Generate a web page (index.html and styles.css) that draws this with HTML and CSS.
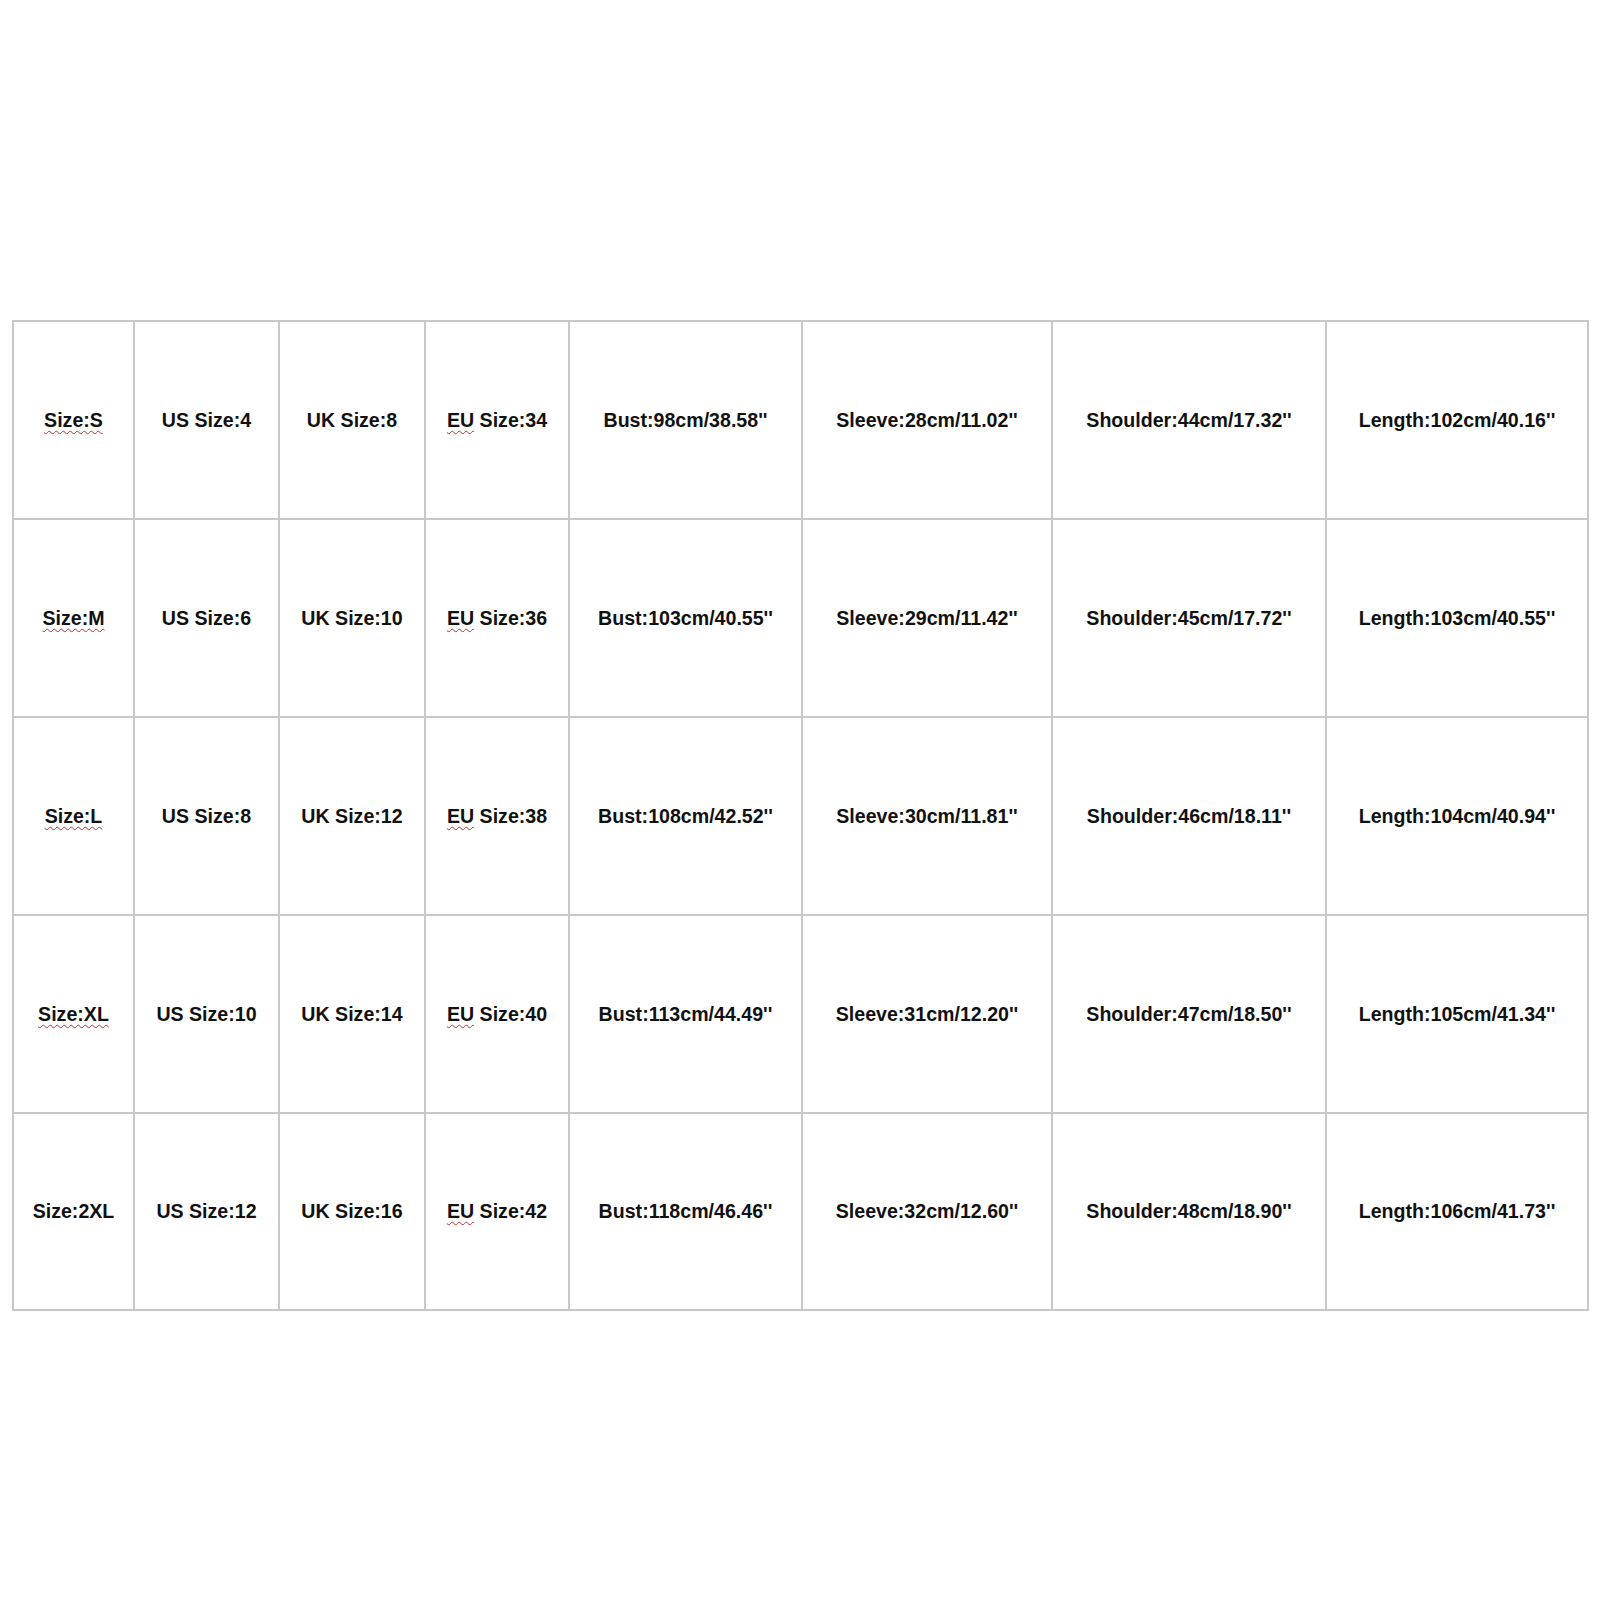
FILE: index.html
```html
<!DOCTYPE html>
<html lang="en">
<head>
<meta charset="utf-8">
<title>Size Chart</title>
<link rel="stylesheet" href="styles.css">
</head>
<body>
<div class="page">
  <table class="chart">
    <colgroup>
      <col class="c1"><col class="c2"><col class="c3"><col class="c4"><col class="c5"><col class="c6"><col class="c7"><col class="c8">
    </colgroup>
    <tbody>
      <tr>
        <td><span class="spell">Size:S</span></td>
        <td>US Size:4</td>
        <td>UK Size:8</td>
        <td><span class="spell">EU</span> Size:34</td>
        <td>Bust:98cm/38.58''</td>
        <td>Sleeve:28cm/11.02''</td>
        <td>Shoulder:44cm/17.32''</td>
        <td>Length:102cm/40.16''</td>
      </tr>
      <tr>
        <td><span class="spell">Size:M</span></td>
        <td>US Size:6</td>
        <td>UK Size:10</td>
        <td><span class="spell">EU</span> Size:36</td>
        <td>Bust:103cm/40.55''</td>
        <td>Sleeve:29cm/11.42''</td>
        <td>Shoulder:45cm/17.72''</td>
        <td>Length:103cm/40.55''</td>
      </tr>
      <tr>
        <td><span class="spell">Size:L</span></td>
        <td>US Size:8</td>
        <td>UK Size:12</td>
        <td><span class="spell">EU</span> Size:38</td>
        <td>Bust:108cm/42.52''</td>
        <td>Sleeve:30cm/11.81''</td>
        <td>Shoulder:46cm/18.11''</td>
        <td>Length:104cm/40.94''</td>
      </tr>
      <tr>
        <td><span class="spell">Size:XL</span></td>
        <td>US Size:10</td>
        <td>UK Size:14</td>
        <td><span class="spell">EU</span> Size:40</td>
        <td>Bust:113cm/44.49''</td>
        <td>Sleeve:31cm/12.20''</td>
        <td>Shoulder:47cm/18.50''</td>
        <td>Length:105cm/41.34''</td>
      </tr>
      <tr class="last">
        <td>Size:2XL</td>
        <td>US Size:12</td>
        <td>UK Size:16</td>
        <td><span class="spell">EU</span> Size:42</td>
        <td>Bust:118cm/46.46''</td>
        <td>Sleeve:32cm/12.60''</td>
        <td>Shoulder:48cm/18.90''</td>
        <td>Length:106cm/41.73''</td>
      </tr>
    </tbody>
  </table>
</div>
</body>
</html>
```
FILE: styles.css
```css
html, body {
  margin: 0;
  padding: 0;
  background: #ffffff;
}

.page {
  width: 1600px;
  height: 1600px;
  padding-top: 320px;
  padding-left: 12px;
  box-sizing: border-box;
}

.chart {
  width: 1576px;
  table-layout: fixed;
  border-collapse: collapse;
  font-family: "Liberation Sans", Arial, sans-serif;
  font-weight: bold;
  font-size: 19.6px;
  color: #111111;
  border-top: 2px solid #c4c4c4;
  border-left: 2px solid #c4c4c4;
  border-right: 2px solid #9a9a9a;
  border-bottom: 2px solid #9a9a9a;
}

.c1 { width: 121px; }
.c2 { width: 145px; }
.c3 { width: 146px; }
.c4 { width: 144px; }
.c5 { width: 233px; }
.c6 { width: 250px; }
.c7 { width: 274px; }
.c8 { width: 262px; }

.chart td {
  height: 196px;
  padding: 0;
  text-align: center;
  vertical-align: middle;
  white-space: nowrap;
  border: 2px solid #c8c8c8;
}

.chart tr.last td {
  height: 195px;
}

.spell {
  text-decoration-line: underline;
  text-decoration-style: wavy;
  text-decoration-color: #b8303c;
  text-decoration-thickness: 1px;
  text-underline-offset: 3px;
}
```
